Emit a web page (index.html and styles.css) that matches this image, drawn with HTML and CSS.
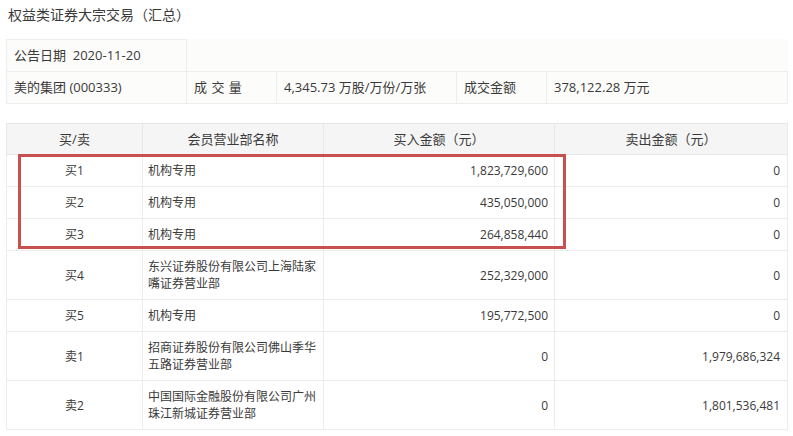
FILE: index.html
```html
<!DOCTYPE html>
<html lang="zh-CN">
<head>
<meta charset="utf-8">
<title>权益类证券大宗交易（汇总）</title>
<link rel="stylesheet" href="styles.css">
</head>
<body>
<div class="page">
  <div class="title">权益类证券大宗交易（汇总）</div>

  <table class="info">
    <colgroup>
      <col class="c1"><col class="c2"><col class="c3"><col class="c4"><col class="c5">
    </colgroup>
    <tr class="info-row1">
      <td class="bordered">公告日期&nbsp; 2020-11-20</td>
      <td colspan="4" class="blank"></td>
    </tr>
    <tr>
      <td class="bordered">美的集团 (000333)</td>
      <td class="bordered spaced">成 交 量</td>
      <td class="bordered">4,345.73 万股/万份/万张</td>
      <td class="bordered">成交金额</td>
      <td class="bordered">378,122.28 万元</td>
    </tr>
  </table>

  <div class="trades-wrap">
    <table class="trades">
      <colgroup>
        <col class="t1"><col class="t2"><col class="t3"><col class="t4">
      </colgroup>
      <thead>
        <tr>
          <th>买/卖</th>
          <th>会员营业部名称</th>
          <th>买入金额（元）</th>
          <th>卖出金额（元）</th>
        </tr>
      </thead>
      <tbody>
        <tr><td class="side">买1</td><td class="name">机构专用</td><td class="num">1,823,729,600</td><td class="num last">0</td></tr>
        <tr><td class="side">买2</td><td class="name">机构专用</td><td class="num">435,050,000</td><td class="num last">0</td></tr>
        <tr><td class="side">买3</td><td class="name">机构专用</td><td class="num">264,858,440</td><td class="num last">0</td></tr>
        <tr><td class="side">买4</td><td class="name">东兴证券股份有限公司上海陆家嘴证券营业部</td><td class="num">252,329,000</td><td class="num last">0</td></tr>
        <tr><td class="side">买5</td><td class="name">机构专用</td><td class="num">195,772,500</td><td class="num last">0</td></tr>
        <tr><td class="side">卖1</td><td class="name">招商证券股份有限公司佛山季华五路证券营业部</td><td class="num">0</td><td class="num last">1,979,686,324</td></tr>
        <tr><td class="side">卖2</td><td class="name">中国国际金融股份有限公司广州珠江新城证券营业部</td><td class="num">0</td><td class="num last">1,801,536,481</td></tr>
      </tbody>
    </table>
    <div class="highlight"></div>
  </div>
</div>
</body>
</html>
```

FILE: styles.css
```css
html, body {
  margin: 0;
  padding: 0;
  background: #ffffff;
}

body {
  font-family: "Open Sans", "Noto Sans CJK SC", sans-serif;
  color: #3a3a3a;
  font-size: 12px;
}

.page {
  padding: 5px 6px 0 6px;
}

.title {
  font-size: 14px;
  line-height: 20px;
  padding-left: 2px;
  color: #3a3a3a;
}

/* info table */
.info {
  margin-top: 14px;
  width: 781px;
  border-collapse: collapse;
  table-layout: fixed;
  background: #fcfcfa;
}

.info col.c1 { width: 180px; }
.info col.c2 { width: 90px; }
.info col.c3 { width: 180px; }
.info col.c4 { width: 90px; }
.info col.c5 { width: 241px; }

.info td {
  height: 31px;
  padding: 0 7px;
  font-size: 13px;
  line-height: 17px;
  white-space: nowrap;
}

.info td.bordered {
  border: 1px solid #ededed;
}

.info td.spaced {
  letter-spacing: 0.5px;
}

.info td.blank {
  border: none;
}

/* trades table */
.trades-wrap {
  position: relative;
  margin-top: 19px;
  width: 781px;
}

.trades {
  width: 781px;
  border-collapse: collapse;
  table-layout: fixed;
}

.trades col.t1 { width: 136px; }
.trades col.t2 { width: 181px; }
.trades col.t3 { width: 231px; }
.trades col.t4 { width: 233px; }

.trades th {
  background: #f5f5f5;
  font-weight: normal;
  font-size: 13px;
  line-height: 17px;
  height: 30px;
  padding: 0 6px;
  border: 1px solid #e8e8e8;
  text-align: center;
  color: #3a3a3a;
}

.trades td {
  border: 1px solid #ececec;
  padding: 7px 6px 7px 6px;
  line-height: 17px;
  font-size: 12px;
  vertical-align: middle;
}

.trades td.side {
  text-align: center;
}

.trades td.name {
  padding-left: 5px;
  padding-right: 6px;
}

.trades td.num {
  text-align: right;
  padding-right: 6px;
}

.trades td.num.last {
  padding-right: 7px;
}

.highlight {
  position: absolute;
  left: 12px;
  top: 31px;
  width: 548px;
  height: 95px;
  box-sizing: border-box;
  border: 3px solid #c8504e;
  pointer-events: none;
}
```
